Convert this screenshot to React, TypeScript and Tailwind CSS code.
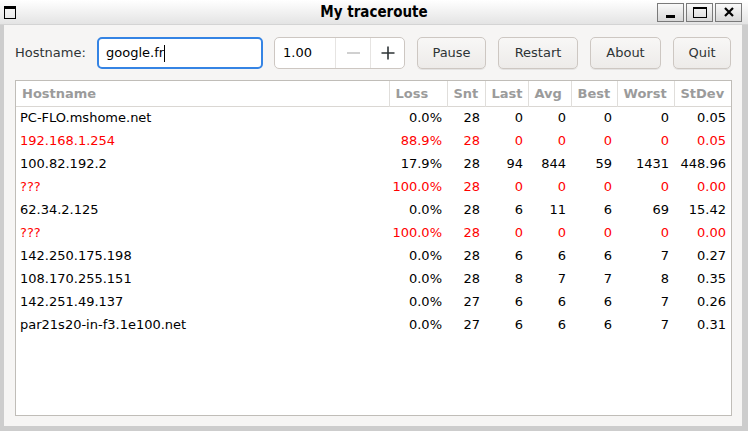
import React from "react";

type Row = { host: string; red: boolean; v: string[] };

const rows: Row[] = [
  { host: "PC-FLO.mshome.net", red: false, v: ["0.0%", "28", "0", "0", "0", "0", "0.05"] },
  { host: "192.168.1.254", red: true, v: ["88.9%", "28", "0", "0", "0", "0", "0.05"] },
  { host: "100.82.192.2", red: false, v: ["17.9%", "28", "94", "844", "59", "1431", "448.96"] },
  { host: "???", red: true, v: ["100.0%", "28", "0", "0", "0", "0", "0.00"] },
  { host: "62.34.2.125", red: false, v: ["0.0%", "28", "6", "11", "6", "69", "15.42"] },
  { host: "???", red: true, v: ["100.0%", "28", "0", "0", "0", "0", "0.00"] },
  { host: "142.250.175.198", red: false, v: ["0.0%", "28", "6", "6", "6", "7", "0.27"] },
  { host: "108.170.255.151", red: false, v: ["0.0%", "28", "8", "7", "7", "8", "0.35"] },
  { host: "142.251.49.137", red: false, v: ["0.0%", "27", "6", "6", "6", "7", "0.26"] },
  { host: "par21s20-in-f3.1e100.net", red: false, v: ["0.0%", "27", "6", "6", "6", "7", "0.31"] },
];

const headers = ["Loss", "Snt", "Last", "Avg", "Best", "Worst", "StDev"];
const widths = [58, 38, 43, 43, 46, 57, 57];

function WinBtn({ children }: { children: React.ReactNode }) {
  return (
    <div className="w-[27px] h-[19px] border border-[#7a7a7a] bg-gradient-to-b from-[#fafafa] to-[#d8d8d8] flex items-center justify-center">
      {children}
    </div>
  );
}

function Btn({ label, w }: { label: string; w: string }) {
  return (
    <div
      className={`${w} h-[32px] rounded-[5px] border border-[#cdc7c2] bg-gradient-to-b from-[#f8f7f6] to-[#edebe9] shadow-[0_1px_0_rgba(0,0,0,0.07)] flex items-center justify-center text-[13px] text-[#2e3436]`}
    >
      {label}
    </div>
  );
}

export default function App() {
  return (
    <div
      className="w-[748px] h-[431px] bg-[#cdcdcd] flex flex-col overflow-hidden"
      style={{ fontFamily: '"DejaVu Sans", "Liberation Sans", sans-serif' }}
    >
      {/* Title bar */}
      <div className="h-[25px] shrink-0 bg-gradient-to-b from-[#ffffff] to-[#e4e4e4] border-b border-[#d4d4d4] flex items-center relative">
        <div className="ml-[4px] w-[12px] h-[13px] border border-black border-t-[3px]" />
        <div
          className="absolute left-0 right-0 top-0 h-[24px] flex items-center justify-center text-[15px] font-bold text-black pointer-events-none"
          style={{ fontFamily: '"DejaVu Sans Condensed", "DejaVu Sans", sans-serif', fontStretch: "condensed" }}
        >
          My traceroute
        </div>
        <div className="ml-auto mr-[6px] flex gap-[2px]">
          <WinBtn>
            <div className="w-[9px] h-[3px] bg-black mt-[9px]" />
          </WinBtn>
          <WinBtn>
            <div className="w-[14px] h-[11px] border border-black border-t-[2px]" />
          </WinBtn>
          <WinBtn>
            <svg width="12" height="12" viewBox="0 0 12 12">
              <path d="M2 2 L10 10 M10 2 L2 10" stroke="black" strokeWidth="2.2" />
            </svg>
          </WinBtn>
        </div>
      </div>

      {/* Content */}
      <div className="ml-[4px] w-[738px] h-[401px] bg-[#f6f5f4] pl-[11px] pt-[12px] flex flex-col">
        <div className="flex items-center gap-[12px] h-[32px]">
          <span className="w-[70px] text-[13px] text-[#2e3436]">Hostname:</span>
          <div className="w-[166px] h-[32px] rounded-[5px] border-2 border-[#3584e4] bg-white flex items-center pl-[7px] text-[13px] text-black">
            google.fr
            <span className="inline-block w-px h-[17px] bg-black" />
          </div>
          <div className="w-[131px] h-[32px] -ml-[1px] rounded-[5px] border border-[#cdc7c2] bg-white flex text-[13px] text-black">
            <div className="w-[60px] flex items-center pl-[8px]">1.00</div>
            <div className="w-[35px] border-l border-[#e6e4e2] flex items-center justify-center">
              <div className="w-[13px] h-[1.5px] bg-[#d0d0d0]" />
            </div>
            <div className="flex-1 border-l border-[#e6e4e2] flex items-center justify-center">
              <svg width="16" height="16" viewBox="0 0 16 16">
                <path d="M8 1.5 V14.5 M1.5 8 H14.5" stroke="#2e3436" strokeWidth="1.6" />
              </svg>
            </div>
          </div>
          <Btn label="Pause" w="w-[69px]" />
          <Btn label="Restart" w="w-[80px]" />
          <Btn label="About" w="w-[71px]" />
          <Btn label="Quit" w="w-[58px]" />
        </div>

        <div className="mt-[11px] w-[717px] h-[336px] border border-[#c0bdb8] bg-white overflow-hidden">
          <table className="table-fixed border-collapse text-[13px]" style={{ width: 715 }}>
            <colgroup>
              <col style={{ width: 373 }} />
              {widths.map((w, i) => (
                <col key={i} style={{ width: w }} />
              ))}
            </colgroup>
            <thead>
              <tr className="h-[25px] border-b border-[#dad7d3]">
                <th className="text-left font-bold text-[#9b9b9b] pl-[6px] border-r border-[#e0dedb] p-0">Hostname</th>
                {headers.map((h, i) => (
                  <th
                    key={h}
                    className={`text-left font-bold text-[#9b9b9b] pl-[6px] p-0 ${i < headers.length - 1 ? "border-r border-[#e0dedb]" : ""}`}
                  >
                    {h}
                  </th>
                ))}
              </tr>
            </thead>
            <tbody>
              {rows.map((r, i) => (
                <tr key={i} className={`h-[23px] ${r.red ? "text-[#ff0000]" : "text-black"}`}>
                  <td className="pl-[4px] p-0 whitespace-nowrap">{r.host}</td>
                  {r.v.map((v, j) => (
                    <td key={j} className="text-right pr-[5px] p-0 whitespace-nowrap">
                      {v}
                    </td>
                  ))}
                </tr>
              ))}
            </tbody>
          </table>
        </div>
      </div>
    </div>
  );
}
